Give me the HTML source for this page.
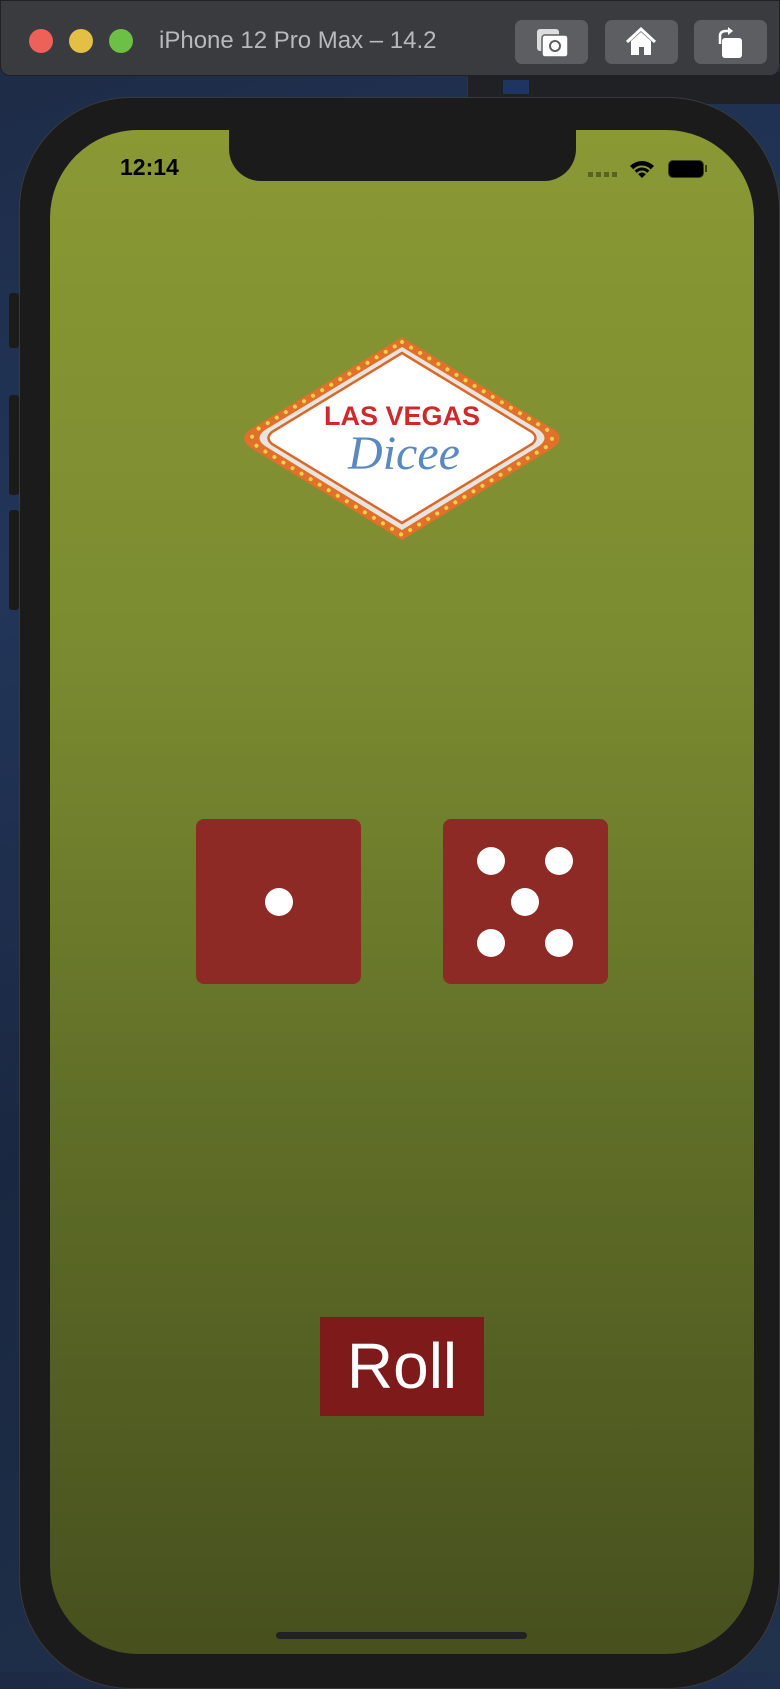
<!DOCTYPE html>
<html><head><meta charset="utf-8">
<style>
html,body{margin:0;padding:0}
body{width:780px;height:1672px;position:relative;overflow:hidden;background:linear-gradient(160deg,#1d2a44 0%,#22365a 30%,#1a2740 60%,#20324c 100%);font-family:"Liberation Sans",sans-serif}
.abs{position:absolute}
#title{left:0;top:0;width:778px;height:74px;background:#3a3b3e;border-radius:0 0 10px 10px;border:1px solid #222}
.tl{top:28px;width:24px;height:24px;border-radius:50%}
.btn{top:19px;width:73px;height:44px;background:#5d5e61;border-radius:7px}
#phone{left:19px;top:97px;width:759px;height:1590px;background:#1b1b1c;border-radius:112px;border:1px solid #3a3a3c}
#screen{left:50px;top:130px;width:704px;height:1524px;border-radius:88px;overflow:hidden;background:linear-gradient(180deg,#8a9934 0%,#7a8a30 35%,#5f6e27 65%,#47501e 100%)}
#notch{left:179px;top:-2px;width:347px;height:53px;background:#1b1b1c;border-radius:0 0 32px 32px}
.die{top:689px;width:165px;height:165px;background:#8d2a26;border-radius:8px}
.pip{width:28px;height:28px;border-radius:50%;background:#fff;position:absolute}
</style></head><body>
<div class="abs" style="left:467px;top:72px;width:320px;height:32px;background:#202124;border-left:1px solid #333"></div>
<div class="abs" style="left:503px;top:80px;width:26px;height:14px;background:#1d3560"></div>
<div id="title" class="abs">
  <div class="abs tl" style="left:28px;background:#ee6158"></div>
  <div class="abs tl" style="left:68px;background:#e4bf46"></div>
  <div class="abs tl" style="left:108px;background:#6cc045"></div>
  <div class="abs" style="left:158px;top:26px;color:#b9b9bb;font-size:24px">iPhone 12 Pro Max – 14.2</div>
  <div class="abs btn" style="left:514px"><svg width="73" height="44" viewBox="0 0 73 44"><rect x="22" y="9" width="22" height="22" rx="3" fill="#ddd"/><rect x="27" y="15" width="26" height="22" rx="3" fill="#fff" stroke="#5d5e61" stroke-width="1.5"/><circle cx="40" cy="26" r="5" fill="none" stroke="#5d5e61" stroke-width="2"/></svg></div>
  <div class="abs btn" style="left:604px"><svg width="73" height="44" viewBox="0 0 73 44"><path d="M22 22 L36 9 L50 22" fill="none" stroke="#fff" stroke-width="3"/><path d="M26 21 L36 12 L46 21 V35 H26Z" fill="#fff"/><rect x="34" y="27" width="5" height="8" fill="#5d5e61"/></svg></div>
  <div class="abs btn" style="left:693px"><svg width="73" height="44" viewBox="0 0 73 44"><rect x="28" y="18" width="20" height="20" rx="3" fill="#fff"/><path d="M26 24 V16 Q26 11 32 11 H36" fill="none" stroke="#fff" stroke-width="2.5"/><path d="M34 7 L39 11 L34 15Z" fill="#fff"/></svg></div>
</div>
<div id="phone" class="abs"></div>
<div class="abs" style="left:9px;top:293px;width:10px;height:55px;background:#1b1b1c;border-radius:3px"></div>
<div class="abs" style="left:9px;top:395px;width:10px;height:100px;background:#1b1b1c;border-radius:3px"></div>
<div class="abs" style="left:9px;top:510px;width:10px;height:100px;background:#1b1b1c;border-radius:3px"></div>
<div id="screen" class="abs">
  <div id="notch" class="abs"></div>
  <div class="abs" style="left:70px;top:24px;font-size:23px;font-weight:bold;color:#000">12:14</div>
  <div class="abs" style="left:538px;top:42px;width:30px;height:5px;background:repeating-linear-gradient(90deg,#5a6324 0 5px,transparent 5px 8px)"></div>
  <svg class="abs" style="left:578px;top:28px" width="28" height="22" viewBox="0 0 28 22"><path d="M14 20 L2 8 A17 17 0 0 1 26 8Z" fill="#000"/><path d="M6 12 A11 11 0 0 1 22 12" stroke="#8a9934" stroke-width="2" fill="none"/><path d="M9.5 15.5 A6 6 0 0 1 18.5 15.5" stroke="#8a9934" stroke-width="2" fill="none"/></svg>
  <div class="abs" style="left:618px;top:30px;width:34px;height:16px;border:1.5px solid #3a4218;border-radius:5px;background:#000"></div>
  <div class="abs" style="left:655px;top:35px;width:2px;height:7px;background:#3a4218"></div>
  <svg class="abs" style="left:191px;top:203px" width="322" height="211" viewBox="0 0 322 211">
    <path d="M161 4 L312 96 Q326 105 312 115 L161 207 L10 115 Q-4 105 10 96Z" fill="#e0702a"/>
    <path d="M161 14 L298 97 Q309 105 298 113 L161 197 L24 113 Q13 105 24 97Z" fill="#e8e4e0"/>
    <path d="M161 20 L291 99 Q298 105 291 111 L161 190 L31 111 Q24 105 31 99Z" fill="#fff" stroke="#d8692a" stroke-width="2.5"/>
    <path d="M161 9 L305 96 Q317 105 305 114 L161 202 L17 114 Q5 105 17 96Z" fill="none" stroke="#f0d04a" stroke-width="4" stroke-dasharray="0.1 10.5" stroke-linecap="round"/>
    <text x="161" y="92" text-anchor="middle" font-family="Liberation Sans,sans-serif" font-weight="bold" font-size="27" fill="#cc2b2b">LAS VEGAS</text>
    <text x="163" y="136" text-anchor="middle" font-family="Liberation Serif,serif" font-style="italic" font-size="48" fill="#5a88c0">Dicee</text>
  </svg>
  <div class="abs die" style="left:146px"><div class="pip" style="left:69px;top:69px"></div></div>
  <div class="abs die" style="left:393px">
    <div class="pip" style="left:34px;top:28px"></div><div class="pip" style="left:102px;top:28px"></div>
    <div class="pip" style="left:68px;top:69px"></div>
    <div class="pip" style="left:34px;top:110px"></div><div class="pip" style="left:102px;top:110px"></div>
  </div>
  <div class="abs" style="left:270px;top:1187px;width:164px;height:99px;background:#7e1a1a;color:#fff;font-size:64px;line-height:99px;text-align:center">Roll</div>
  <div class="abs" style="left:226px;top:1502px;width:251px;height:7px;border-radius:4px;background:#222"></div>
</div>
</body></html>
